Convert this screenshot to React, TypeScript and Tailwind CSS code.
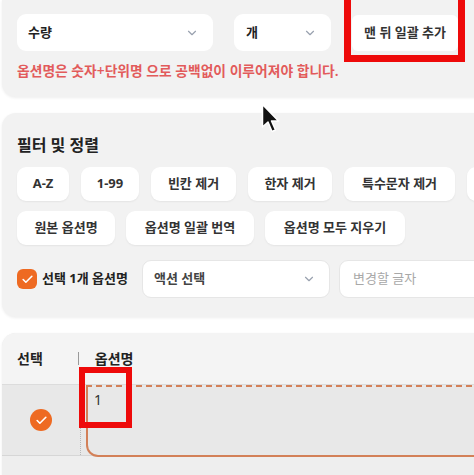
import { ChevronDown, Check } from 'lucide-react';

const chipsRow1 = [
  { label: 'A-Z', w: 'w-[52px]' },
  { label: '1-99', w: 'w-[58px]' },
  { label: '빈칸 제거', w: 'w-[85px]' },
  { label: '한자 제거', w: 'w-[84px]' },
  { label: '특수문자 제거', w: 'w-[111px]' },
  { label: '', w: 'w-[85px]' },
];

const chipsRow2 = [
  { label: '원본 옵션명', w: 'w-[98px]' },
  { label: '옵션명 일괄 번역', w: 'w-[128px]' },
  { label: '옵션명 모두 지우기', w: 'w-[140px]' },
];

const Chip = ({ label, w }: { label: string; w: string }) => (
  <button
    className={`${w} h-[34px] shrink-0 rounded-[9px] bg-white text-[13px] font-bold text-[#333] shadow-[0_1px_2px_rgba(0,0,0,0.06)] flex items-center justify-center`}
  >
    {label}
  </button>
);

export default function App() {
  return (
    <div className="relative w-[474px] h-[475px] overflow-hidden bg-white font-['Noto_Sans','Noto_Sans_CJK_KR',sans-serif] text-[#222]">
      {/* 옵션 추가 */}
      <div className="w-[540px] ml-[2px] bg-[#f2f2f2] rounded-b-[14px] pt-[14px] pb-[17px] pl-[15px] shadow-[0_1px_3px_rgba(0,0,0,0.07)]">
        <div className="flex items-center">
          <div className="w-[196px] h-[37px] rounded-[9px] bg-white flex items-center justify-between pl-[11px] pr-[14px]">
            <span className="text-[13px] font-semibold">수량</span>
            <ChevronDown className="w-[14px] h-[14px] text-gray-400" />
          </div>
          <div className="ml-[21px] w-[97px] h-[37px] rounded-[9px] bg-white flex items-center justify-between pl-[12px] pr-[14px]">
            <span className="text-[13px] font-semibold">개</span>
            <ChevronDown className="w-[14px] h-[14px] text-gray-400" />
          </div>
          <button className="ml-[21px] w-[106px] h-[36px] rounded-[6px] bg-white flex items-center justify-center text-[13px] font-bold text-[#333]">
            맨 뒤 일괄 추가
          </button>
        </div>
        <p className="mt-[11px] h-[18px] leading-[18px] text-[13.8px] font-semibold text-[#e25b5b] whitespace-nowrap">
          옵션명은 숫자+단위명 으로 공백없이 이루어져야 합니다.
        </p>
      </div>

      {/* 필터 및 정렬 */}
      <div className="mt-[16px] w-[540px] ml-[2px] bg-[#f2f2f2] rounded-[14px] pt-[21px] pb-[19px] pl-[15px] shadow-[0_1px_3px_rgba(0,0,0,0.07)]">
        <h3 className="text-[16px] leading-[22px] font-bold">필터 및 정렬</h3>
        <div className="mt-[11px] flex gap-[12px]">
          {chipsRow1.map((c, i) => (
            <Chip key={i} {...c} />
          ))}
        </div>
        <div className="mt-[10px] flex gap-[11px]">
          {chipsRow2.map((c) => (
            <Chip key={c.label} {...c} />
          ))}
        </div>
        <div className="mt-[15px] flex items-center">
          <div className="w-[20px] h-[20px] rounded-[6px] bg-[#ee6a22] flex items-center justify-center">
            <Check className="w-[13px] h-[13px] text-white" strokeWidth={3} />
          </div>
          <span className="ml-[5px] text-[13px] font-bold">선택 1개 옵션명</span>
          <div className="ml-[14px] w-[188px] h-[38px] rounded-[9px] bg-white border border-[#e6e6e6] flex items-center justify-between pl-[11px] pr-[13px]">
            <span className="text-[13px] font-semibold text-[#444]">액션 선택</span>
            <ChevronDown className="w-[14px] h-[14px] text-gray-400" />
          </div>
          <div className="ml-[9px] w-[200px] h-[38px] rounded-[9px] bg-white border border-[#e6e6e6] flex items-center pl-[13px]">
            <span className="text-[13px] text-[#a8a8a8]">변경할 글자</span>
          </div>
        </div>
      </div>

      {/* 옵션 테이블 */}
      <div className="mt-[16px] w-[540px] ml-[2px] bg-[#ececec] rounded-t-[14px] shadow-[0_1px_3px_rgba(0,0,0,0.07)] overflow-hidden">
        <div className="h-[52px] bg-[#f4f4f4] flex items-center border-b border-[#dcdcdc]">
          <span className="ml-[15px] text-[14px] font-bold">선택</span>
          <span className="ml-[35px] w-px h-[13px] bg-[#999]" />
          <span className="ml-[16px] text-[14px] font-bold">옵션명</span>
        </div>
        <div className="h-[71px] flex bg-[#e8e8e8] border-b border-[#d6d6d6]">
          <div className="w-[79px] flex items-center justify-center border-r border-dotted border-[#b8b8b8]">
            <div className="w-[22px] h-[22px] rounded-full bg-[#ee6a22] flex items-center justify-center">
              <Check className="w-[13px] h-[13px] text-white" strokeWidth={3} />
            </div>
          </div>
          <div className="flex-1 pl-[5px]">
            <div className="h-[72px] border-2 border-[#d38058] [border-top-style:dashed] rounded-bl-[12px] pl-[6px] pt-[2px] text-[14px] text-[#333]">
              1
            </div>
          </div>
        </div>
        <div className="h-[40px] bg-[#eeeeee]" />
      </div>

      {/* 강조 박스 */}
      <div className="absolute left-[344px] top-[-12px] w-[121px] h-[74px] border-[7px] border-[#ee0a0a]" />
      <div className="absolute left-[79px] top-[367px] w-[53px] h-[61px] border-[6px] border-[#ee0a0a]" />

      {/* 마우스 커서 */}
      <svg className="absolute left-[261px] top-[103px]" width="20" height="32" viewBox="0 0 20 32">
        <path
          d="M1.5 1.5 L1.5 24 L7 19 L11 28.5 L14.5 27 L10.5 18 L17.5 18 Z"
          fill="#111"
          stroke="#fff"
          strokeWidth="1.5"
          strokeLinejoin="round"
        />
      </svg>
    </div>
  );
}
